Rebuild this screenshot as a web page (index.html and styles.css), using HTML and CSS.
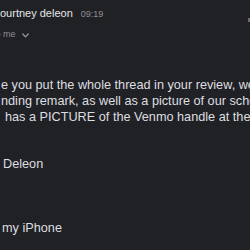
FILE: index.html
```html
<!DOCTYPE html>
<html>
<head>
<meta charset="utf-8">
<link rel="stylesheet" href="styles.css">
</head>
<body>
<div class="mail">
  <div class="header">
    <div class="name-row">
      <span class="name">ourtney deleon</span>
      <span class="time">09:19</span>
    </div>
    <div class="to-row">
      <span class="to">to me</span>
      <svg class="chev" width="7" height="5" viewBox="0 0 7 5"><path d="M0.8 1 L3.5 3.8 L6.2 1" fill="none" stroke="#9a9aa0" stroke-width="1.2" stroke-linecap="round" stroke-linejoin="round"/></svg>
    </div>
  </div>
  <div class="content">
    <div class="line l1">e you put the whole thread in your review, we</div>
    <div class="line l2">nding remark, as well as a picture of our school</div>
    <div class="line l3">has a PICTURE of the Venmo handle at the top</div>
  </div>
  <div class="sig">Deleon</div>
  <div class="sent">my iPhone</div>
  <div class="edge-mark"></div>
</div>
</body>
</html>
```

FILE: styles.css
```css
html, body {
  margin: 0;
  padding: 0;
  background: #202125;
  width: 250px;
  height: 250px;
  overflow: hidden;
}
.mail {
  position: relative;
  height: 250px;
  font-family: "Liberation Sans", Arial, sans-serif;
  color: #dedee0;
  white-space: nowrap;
}
.header {
  padding-top: 5px;
}
.name-row {
  display: flex;
  align-items: baseline;
  gap: 8px;
  line-height: 16px;
  height: 16px;
}
.name {
  font-size: 11px;
  color: #e6e6e8;
}
.time {
  font-size: 9px;
  color: #8e8e93;
}
.to-row {
  display: flex;
  align-items: center;
  gap: 6px;
  margin-top: 7px;
  margin-left: -7px;
  height: 12px;
  line-height: 12px;
}
.to {
  font-size: 9px;
  color: #8e8e93;
}
.chev {
  margin-top: 2px;
}
.content {
  margin-top: 37px;
  font-size: 12.7px;
  line-height: 16px;
}
.l1 { margin-left: 1px; }
.l2 { margin-left: 1px; }
.l3 { margin-left: 5px; }
.sig {
  margin-top: 31px;
  margin-left: 3px;
  font-size: 12.7px;
  line-height: 16px;
}
.sent {
  margin-top: 48px;
  margin-left: 2px;
  font-size: 12.7px;
  line-height: 16px;
}
.edge-mark {
  position: absolute;
  right: 0;
  top: 18px;
  width: 2px;
  height: 4px;
  background: #6a6a70;
}
```
